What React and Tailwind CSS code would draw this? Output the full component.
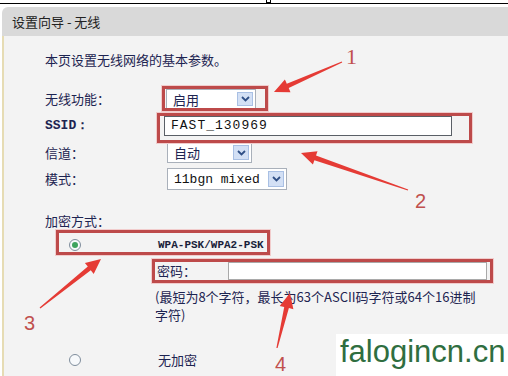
import React from "react";

const arrowPoints = (x1, y1, x2, y2) => {
  // tapered shaft + triangular head, tail -> tip
  const dx = x2 - x1;
  const dy = y2 - y1;
  const len = Math.hypot(dx, dy);
  const ux = dx / len;
  const uy = dy / len;
  const nx = -uy;
  const ny = ux;
  const head = 15;
  const bx = x2 - ux * head;
  const by = y2 - uy * head;
  const pts = [
    [x1 + nx * 0.6, y1 + ny * 0.6],
    [bx + nx * 2.4, by + ny * 2.4],
    [bx + nx * 7, by + ny * 7],
    [x2, y2],
    [bx - nx * 7, by - ny * 7],
    [bx - nx * 2.4, by - ny * 2.4],
    [x1 - nx * 0.6, y1 - ny * 0.6],
  ];
  return pts.map(([x, y]) => `${x.toFixed(1)},${y.toFixed(1)}`).join(" ");
};

const arrows = [
  [342, 62, 274, 92],
  [408, 190, 301, 153],
  [40, 308, 101, 259],
  [277, 348, 290, 293],
];

const Chevron = () => (
  <svg width="9" height="6" viewBox="0 0 9 6">
    <path d="M1 1 L4.5 4.5 L8 1" fill="none" stroke="#2f4f86" strokeWidth="1.8" />
  </svg>
);

const Select = ({ className, children }) => (
  <div className={`flex items-center border border-[#a9b0ba] bg-white ${className}`}>
    <span className="flex-1 pl-[6px] leading-none">{children}</span>
    <div className="mr-[2px] flex h-[calc(100%-4px)] w-[16px] items-center justify-center border border-[#a9c0e4] bg-[#d3e0f5]">
      <Chevron />
    </div>
  </div>
);

const Radio = ({ checked }) => (
  <div className="flex h-[12px] w-[12px] items-center justify-center rounded-full border border-[#7f8d9c] bg-[#f7f9fb]">
    {checked && <div className="h-[6px] w-[6px] rounded-full bg-[#3ea35e]" />}
  </div>
);

const RedBox = ({ className }) => (
  <div
    className={`absolute border-[3px] border-[#bd4a4a] shadow-[0_0_0_1px_#f1cccc] ${className}`}
  />
);

export default function App() {
  return (
    <div className="relative flex h-[376px] w-[508px] flex-col overflow-hidden bg-white font-['Noto_Sans_CJK_SC',sans-serif] text-[13px] text-[#1d2451]">
      {/* top frame edge */}
      <div className="relative h-[3px]">
        <div className="absolute left-[266px] top-0 h-[3px] w-[5px] border border-t-0 border-black" />
      </div>
      <div className="h-px bg-black" />
      <div className="h-[3px]" />

      <div className="ml-[2px] flex flex-1 flex-col overflow-hidden rounded-tl-[6px]">
        <div className="flex h-[29px] items-center bg-[#d9d9d9] pl-[10px] text-[#222]">
          设置向导 - 无线
        </div>

        <div className="flex-1 border-l-2 border-[#e6dcb4] bg-[#f3f3f3] pl-[41px]">
          <p className="mt-[16px] leading-[16px]">本页设置无线网络的基本参数。</p>

          <div className="mt-[18px] flex flex-col">
            <div className="flex h-[26px] items-center">
              <span className="w-[121px]">无线功能：</span>
              <Select className="h-[20px] w-[90px]">启用</Select>
            </div>
            <div className="flex h-[28px] items-center">
              <span className="w-[119px] font-['Liberation_Mono',monospace] font-bold">SSID：</span>
              <div className="flex h-[20px] w-[288px] items-center border border-[#5a5f66] bg-white pl-[6px] font-['Liberation_Mono',monospace] text-[13px] tracking-[1px] text-[#111]">
                FAST_130969
              </div>
            </div>
            <div className="flex h-[25px] items-center">
              <span className="w-[122px]">信道：</span>
              <Select className="h-[21px] w-[85px]">自动</Select>
            </div>
            <div className="flex h-[28px] items-center">
              <span className="w-[122px]">模式：</span>
              <Select className="h-[22px] w-[120px] font-['Liberation_Mono',monospace] text-[#111]">
                11bgn mixed
              </Select>
            </div>
          </div>

          <p className="mt-[19px] leading-[18px]">加密方式：</p>

          <div className="flex h-[24px] items-center pt-[6px]">
            <div className="ml-[24px]">
              <Radio checked />
            </div>
            <span className="ml-[77px] font-['Liberation_Mono',monospace] text-[11px] font-bold text-[#1a1f3a]">
              WPA-PSK/WPA2-PSK
            </span>
          </div>

          <div className="mt-[5px] flex h-[24px] items-center pl-[112px]">
            <span className="w-[71px]">密码：</span>
            <div className="h-[18px] w-[259px] border border-[#a9a9a9] bg-white" />
          </div>

          <p className="mt-[5px] pl-[110px] leading-[18px]">
            (最短为8个字符，最长为63个ASCII码字符或64个16进制
            <br />
            字符)
          </p>

          <div className="mt-[24px] flex h-[24px] items-center">
            <div className="ml-[24px]">
              <Radio />
            </div>
            <span className="ml-[77px]">无加密</span>
          </div>
        </div>
      </div>

      {/* annotation boxes */}
      <RedBox className="left-[162px] top-[86px] h-[25px] w-[106px]" />
      <RedBox className="left-[157px] top-[113px] h-[30px] w-[315px]" />
      <RedBox className="left-[56px] top-[230px] h-[25px] w-[214px]" />
      <RedBox className="left-[152px] top-[259px] h-[24px] w-[341px]" />

      {/* annotation arrows */}
      <svg className="pointer-events-none absolute left-0 top-0" width="508" height="376">
        {arrows.map((a, i) => (
          <polygon key={i} points={arrowPoints(...a)} fill="#e53b35" />
        ))}
      </svg>

      <span className="absolute left-[346px] top-[46px] font-['Liberation_Serif',serif] text-[22px] leading-none text-[#c0504d]">
        1
      </span>
      <span className="absolute left-[415px] top-[191px] font-['Liberation_Sans',sans-serif] text-[20px] leading-none text-[#c0504d]">
        2
      </span>
      <span className="absolute left-[24px] top-[313px] font-['Liberation_Sans',sans-serif] text-[20px] leading-none text-[#c0504d]">
        3
      </span>
      <span className="absolute left-[275px] top-[354px] font-['Liberation_Sans',sans-serif] text-[20px] leading-none text-[#c0504d]">
        4
      </span>

      {/* watermark */}
      <div className="absolute left-[336px] top-[334px] h-[42px] w-[172px] bg-white pl-[4px] font-['Liberation_Sans',sans-serif] text-[31px] leading-[36px] text-[#2f6e40]">
        falogincn.cn
      </div>
    </div>
  );
}
